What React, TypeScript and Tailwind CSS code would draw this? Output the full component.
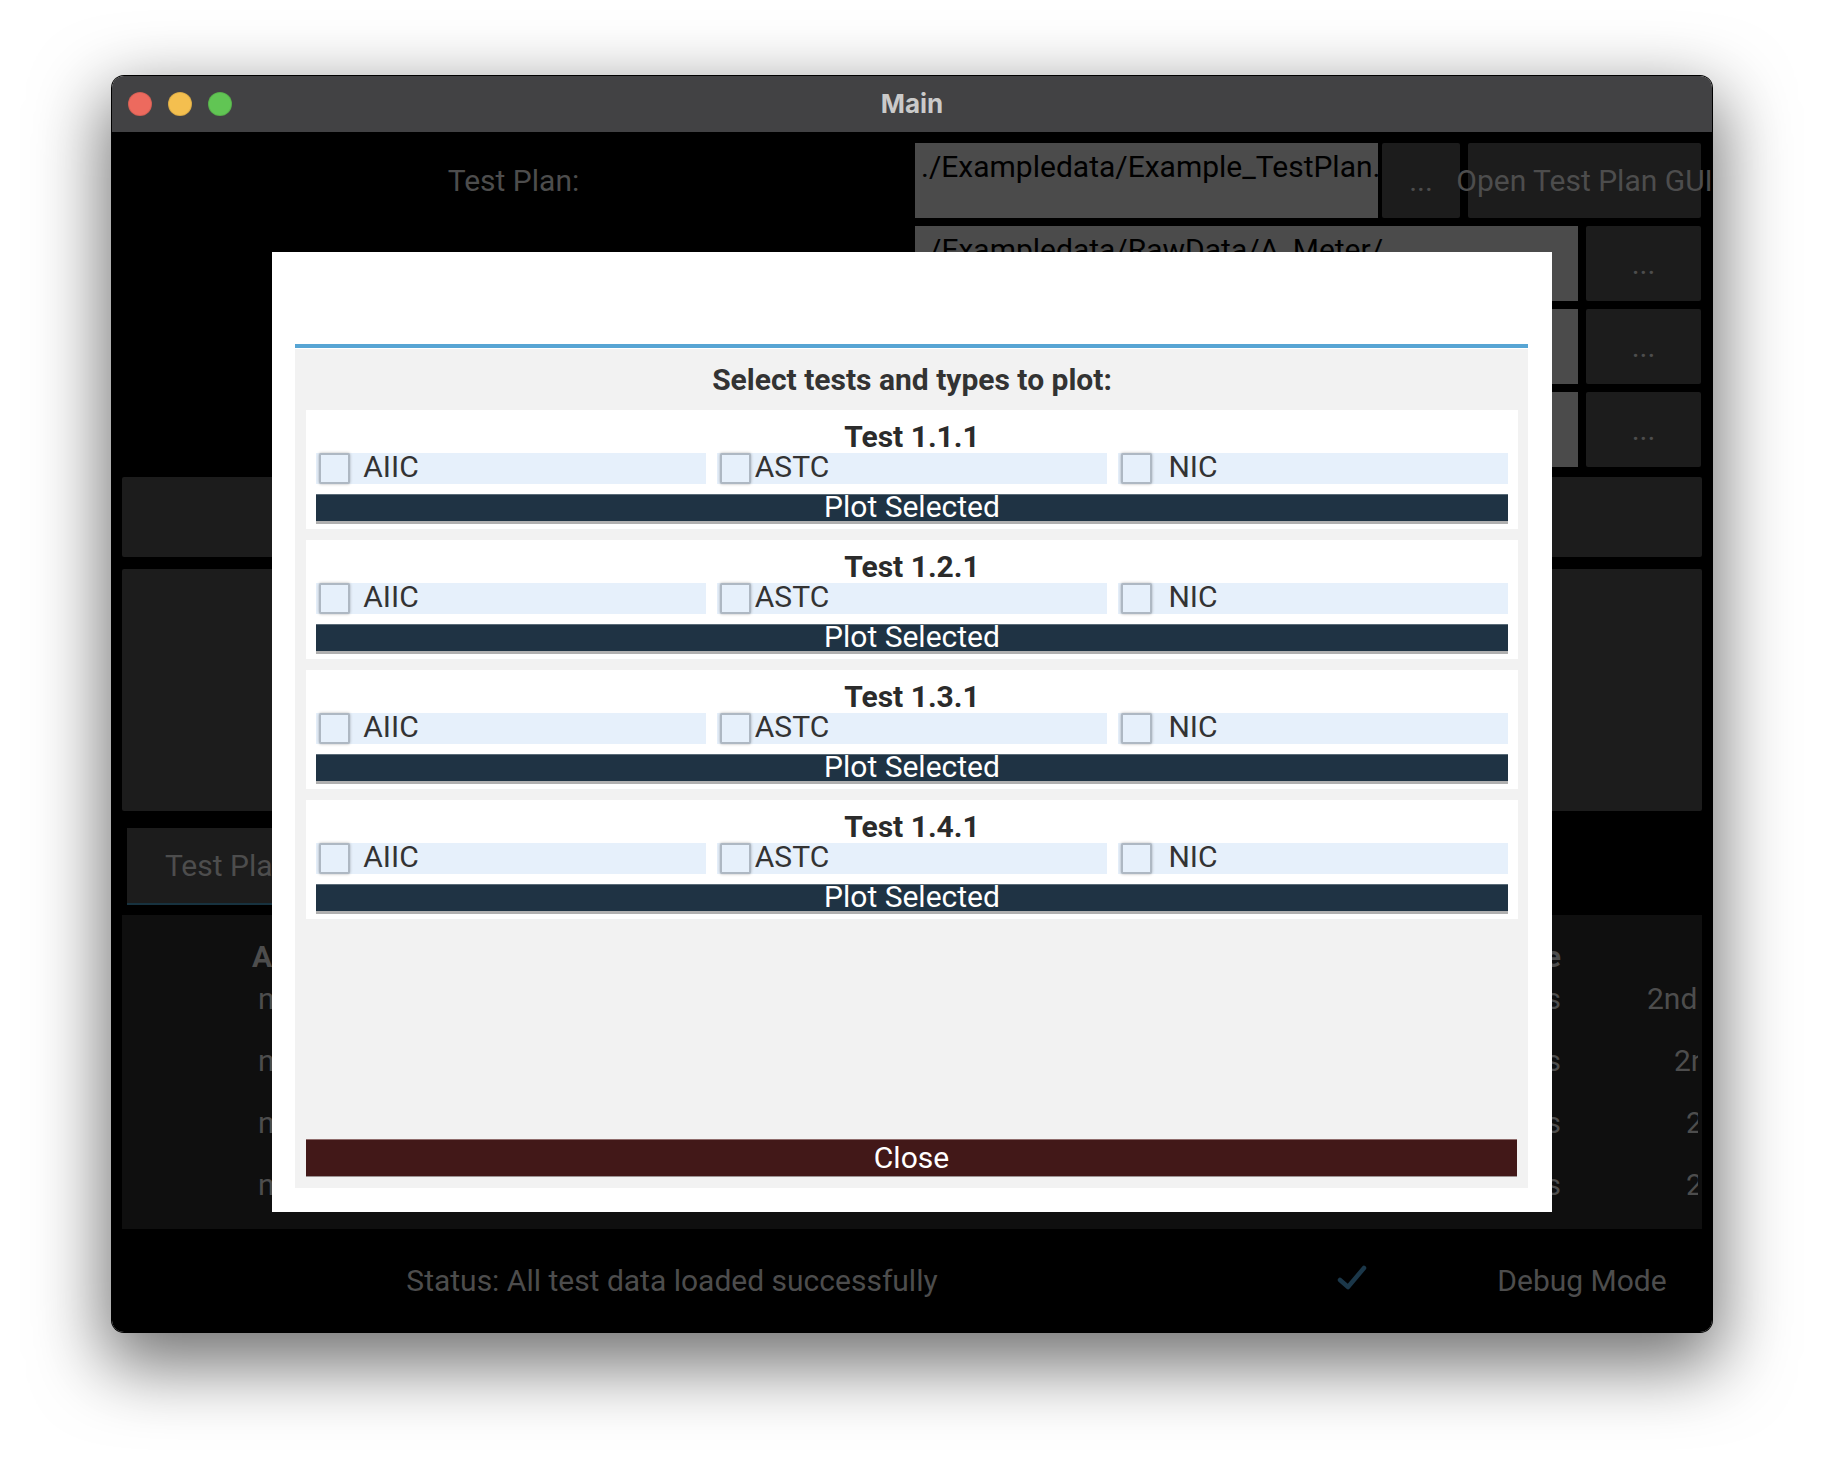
import React from 'react'

const tests = ['1.1.1', '1.2.1', '1.3.1', '1.4.1']
const types = ['AIIC', 'ASTC', 'NIC']

const dim = 'text-[#4d4d4d]'

function TrafficLights(): React.JSX.Element {
  return (
    <div className="flex items-center gap-[16px] pl-[16px]">
      <span className="w-[24px] h-[24px] rounded-full bg-[#ed6a5e] border border-black/10" />
      <span className="w-[24px] h-[24px] rounded-full bg-[#f4bf4f] border border-black/10" />
      <span className="w-[24px] h-[24px] rounded-full bg-[#61c554] border border-black/10" />
    </div>
  )
}

interface PathRowProps {
  label: string
  path: string
  padLeft: string
}
function PathRow({ label, path, padLeft }: PathRowProps): React.JSX.Element {
  return (
    <div className="flex h-[75px] mt-[8px]">
      <div className={`w-[783px] flex items-center justify-center whitespace-nowrap ${dim}`}>
        {label}
      </div>
      <div
        className={`ml-[10px] w-[663px] bg-[#4b4b4b] pt-[6px] ${padLeft} leading-[35px] text-black whitespace-nowrap overflow-hidden`}>
        {path}
      </div>
      <div
        className={`ml-[8px] w-[115px] bg-[#1c1c1c] rounded-[2px] flex items-center justify-center ${dim}`}>
        ...
      </div>
    </div>
  )
}

function TableRow({ left, right, third, thirdPad }: { left: string; right: string; third: string; thirdPad: string }): React.JSX.Element {
  return (
    <div className={`flex h-[62px] items-center ${dim}`}>
      <div className="w-[700px] pl-[136px] whitespace-nowrap overflow-hidden">{left}</div>
      <div className="w-[739px] text-right whitespace-nowrap overflow-hidden">{right}</div>
      <div className={`w-[137px] ${thirdPad} whitespace-nowrap overflow-hidden`}>{third}</div>
    </div>
  )
}

function TestCard({ id }: { id: string }): React.JSX.Element {
  return (
    <div className="h-[119px] bg-white px-[10px] pt-[12px]">
      <div className="h-[30px] flex items-center justify-center font-bold text-[#2b2b2b] leading-[30px]">
        Test {id}
      </div>
      <div className="mt-px h-[30px] grid grid-cols-3 gap-[11px]">
        {types.map((t) => (
          <div key={t} className="bg-[#e6f0fb] flex items-center">
            <span className="ml-[3px] w-[31px] h-[31px] border-2 border-[#aeb8c3] rounded-[2px] bg-[#e6f0fb] shadow-[0_0_3px_rgba(0,0,0,0.3)]" />
            <span className="ml-[1px] w-[80px] text-center text-[#333] leading-[28px] -translate-y-[2px]">{t}</span>
          </div>
        ))}
      </div>
      <div className="mt-[11px] h-[27px] bg-[#1f3344] border-t border-[#5a6b78] flex items-center justify-center text-white leading-[25px]">
        <span className="-translate-y-[2px]">Plot Selected</span>
      </div>
      <div className="h-[3px] bg-[#b0b0b0]" />
    </div>
  )
}

function PlotDialog(): React.JSX.Element {
  return (
    <div className="absolute inset-0 flex items-center justify-center">
      <div className="w-[1280px] h-[960px] bg-white flex flex-col pl-[23px] pr-[24px] pb-[24px]">
        <div className="h-[92px]" />
        <div className="h-[4px] bg-[#57a5d4]" />
        <div className="mt-px flex-1 bg-[#f2f2f2] flex flex-col pt-[10px] pl-[11px] pr-[10px] pb-[11px]">
          <div className="h-[40px] flex items-center justify-center font-bold text-[#333]">
            Select tests and types to plot:
          </div>
          <div className="mt-[11px] flex flex-col gap-[11px]">
            {tests.map((id) => (
              <TestCard key={id} id={id} />
            ))}
          </div>
          <div className="flex-1" />
          <div className="mr-px h-[38px] bg-[#421818] border-t border-[#8f6c6c] border-b border-b-[#9d9393] flex items-center justify-center text-white leading-[34px]">
            Close
          </div>
        </div>
      </div>
    </div>
  )
}

export default function App(): React.JSX.Element {
  return (
    <div className="w-[1824px] h-[1480px] bg-white pl-[112px] pt-[76px] font-['Roboto',sans-serif] text-[30px]">
      <div className="w-[1600px] h-[1256px] rounded-[12px] overflow-hidden ring-1 ring-black shadow-[0_26px_70px_8px_rgba(0,0,0,0.55)] flex flex-col">
        {/* title bar */}
        <div className="h-[56px] bg-[#424244] grid grid-cols-[1fr_auto_1fr] items-center">
          <TrafficLights />
          <div className="font-['Inter',sans-serif] font-bold text-[26px] text-[#cacaca] -mt-[2px]">Main</div>
          <div />
        </div>

        {/* app content */}
        <div className="relative h-[1200px] bg-black px-[10px] pt-[11px] flex flex-col overflow-hidden">
          <div className="flex h-[75px]">
            <div className={`w-[783px] flex items-center justify-center ${dim}`}>Test Plan:</div>
            <div className="ml-[10px] w-[463px] bg-[#4b4b4b] pt-[6px] pl-[6px] leading-[35px] text-black whitespace-nowrap overflow-hidden">
              ./Exampledata/Example_TestPlan.
            </div>
            <div className={`ml-[4px] w-[78px] bg-[#1c1c1c] rounded-[2px] flex items-center justify-center ${dim}`}>
              ...
            </div>
            <div className={`ml-[8px] w-[233px] bg-[#1c1c1c] rounded-[2px] flex items-center justify-center whitespace-nowrap ${dim}`}>
              Open Test Plan GUI
            </div>
          </div>
          <PathRow label="A-Meter Folder:" path="/Exampledata/RawData/A_Meter/" padLeft="pl-[14px]" />
          <PathRow label="E-Meter Folder:" path="./Exampledata/RawData/E_Meter/" padLeft="pl-[6px]" />
          <PathRow label="D-Meter Folder:" path="./Exampledata/RawData/D_Meter/" padLeft="pl-[6px]" />

          <div className="h-[80px] mt-[10px] bg-[#1c1c1c] rounded-[2px]" />
          <div className="h-[242px] mt-[12px] bg-[#1c1c1c] rounded-[2px]" />

          <div className="h-[77px] mt-[17px] flex">
            <div className={`ml-[5px] w-[200px] bg-[#1c1c1c] border-b-2 border-[#17323f] flex items-center justify-center ${dim}`}>
              Test Plan
            </div>
          </div>

          <div className="h-[314px] mt-[10px] bg-[#0f0f0f] pt-[30px] overflow-hidden">
            <div className={`flex h-[22px] items-center font-bold ${dim}`}>
              <div className="w-[700px] pl-[130px] whitespace-nowrap">Assembly</div>
              <div className="w-[739px] text-right whitespace-nowrap">Test Type</div>
            </div>
            <TableRow left="nan" right="Floors" third="2nd Floor" thirdPad="pl-[86px]" />
            <TableRow left="nan" right="Floors" third="2nd Floor" thirdPad="pl-[113px]" />
            <TableRow left="nan" right="Floors" third="2nd Floor" thirdPad="pl-[125px]" />
            <TableRow left="nan" right="Floors" third="2nd Floor" thirdPad="pl-[125px]" />
          </div>

          <div className="h-[103px] flex items-center">
            <div className={`w-[1100px] text-center whitespace-nowrap ${dim}`}>
              Status: All test data loaded successfully
            </div>
            <div className="w-[260px] flex items-center justify-center -mt-[6px]">
              <svg width="30" height="26" viewBox="0 0 30 26" fill="none">
                <path d="M3 15 L11 22 L27 3" stroke="#1b3749" strokeWidth="4.5" strokeLinecap="round" strokeLinejoin="round" />
              </svg>
            </div>
            <div className={`w-[200px] text-center whitespace-nowrap ${dim}`}>Debug Mode</div>
          </div>

          <PlotDialog />
        </div>
      </div>
    </div>
  )
}
